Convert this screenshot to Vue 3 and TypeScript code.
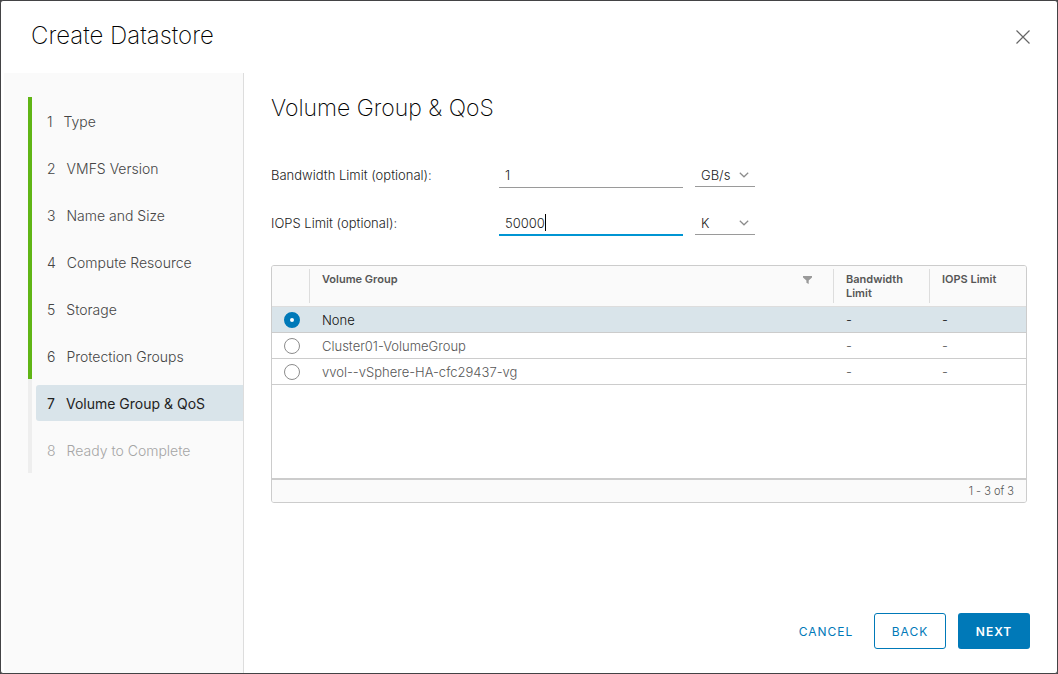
<script setup lang="ts">
import { ref } from 'vue'

interface Step {
  label: string
  state: 'done' | 'active' | 'pending'
}

interface VolumeGroup {
  id: string
  name: string
  bandwidth: string
  iops: string
}

const steps: Step[] = [
  { label: 'Type', state: 'done' },
  { label: 'VMFS Version', state: 'done' },
  { label: 'Name and Size', state: 'done' },
  { label: 'Compute Resource', state: 'done' },
  { label: 'Storage', state: 'done' },
  { label: 'Protection Groups', state: 'done' },
  { label: 'Volume Group & QoS', state: 'active' },
  { label: 'Ready to Complete', state: 'pending' },
]

const groups: VolumeGroup[] = [
  { id: 'none', name: 'None', bandwidth: '-', iops: '-' },
  { id: 'cluster01', name: 'Cluster01-VolumeGroup', bandwidth: '-', iops: '-' },
  { id: 'vvol', name: 'vvol--vSphere-HA-cfc29437-vg', bandwidth: '-', iops: '-' },
]

const bandwidth = ref('1')
const bandwidthUnit = ref('GB/s')
const iops = ref('50000')
const iopsUnit = ref('K')
const selected = ref('none')
</script>

<template>
  <div class="dialog" role="dialog" aria-labelledby="dialog-title">
    <header class="dialog-header">
      <h1 id="dialog-title">Create Datastore</h1>
      <button class="close" type="button" aria-label="Close">
        <svg viewBox="0 0 14 14" width="14" height="14" aria-hidden="true">
          <path d="M0.5 0.5 13.5 13.5M13.5 0.5 0.5 13.5" fill="none" stroke="currentColor" stroke-width="1.2" />
        </svg>
      </button>
    </header>

    <div class="dialog-body">
      <nav class="steps" aria-label="Steps">
        <ol>
          <li v-for="(step, i) in steps" :key="step.label" :class="step.state">
            <button type="button" :disabled="step.state === 'pending'">
              <span>{{ i + 1 }}</span>
              <span>{{ step.label }}</span>
            </button>
          </li>
        </ol>
      </nav>

      <main class="content">
        <h2>Volume Group &amp; QoS</h2>

        <form class="limits" @submit.prevent>
          <div class="row">
            <label for="bandwidth">Bandwidth Limit (optional):</label>
            <div class="field">
              <input id="bandwidth" v-model="bandwidth" type="text" />
            </div>
            <div class="unit">
              <select v-model="bandwidthUnit" aria-label="Bandwidth unit">
                <option>GB/s</option>
                <option>MB/s</option>
              </select>
              <svg viewBox="0 0 10 6" width="10" height="6" aria-hidden="true">
                <path d="M0.8 0.8 5 4.8 9.2 0.8" />
              </svg>
            </div>
          </div>
          <div class="row">
            <label for="iops">IOPS Limit (optional):</label>
            <div class="field focused">
              <input id="iops" v-model="iops" type="text" />
              <span class="caret"></span>
            </div>
            <div class="unit">
              <select v-model="iopsUnit" aria-label="IOPS unit">
                <option>K</option>
                <option>M</option>
              </select>
              <svg viewBox="0 0 10 6" width="10" height="6" aria-hidden="true">
                <path d="M0.8 0.8 5 4.8 9.2 0.8" />
              </svg>
            </div>
          </div>
        </form>

        <section class="datagrid">
          <div class="grid-area">
            <table>
              <colgroup>
                <col class="col-radio" />
                <col />
                <col class="col-limit" />
                <col class="col-last" />
              </colgroup>
              <thead>
                <tr>
                  <th aria-label="Select"></th>
                  <th scope="col">
                    <div class="head">
                      <span>Volume Group</span>
                      <button class="filter" type="button" aria-label="Filter">
                        <svg viewBox="0 0 9 8" width="9" height="8" aria-hidden="true">
                          <path d="M0 0H9V1.4L5.7 4.4V8L3.4 6.8V4.4L0 1.4Z" fill="currentColor" />
                        </svg>
                      </button>
                    </div>
                  </th>
                  <th scope="col"><div class="head">Bandwidth Limit</div></th>
                  <th scope="col"><div class="head">IOPS Limit</div></th>
                </tr>
              </thead>
              <tbody>
                <tr v-for="group in groups" :key="group.id" :class="{ selected: selected === group.id }">
                  <td class="pick">
                    <input :id="group.id" v-model="selected" type="radio" name="volume-group" :value="group.id" />
                  </td>
                  <td><label :for="group.id">{{ group.name }}</label></td>
                  <td>{{ group.bandwidth }}</td>
                  <td>{{ group.iops }}</td>
                </tr>
              </tbody>
            </table>
          </div>
          <footer class="grid-footer">1 - 3 of 3</footer>
        </section>

        <div class="actions">
          <button class="btn link" type="button">CANCEL</button>
          <button class="btn outline" type="button">BACK</button>
          <button class="btn primary" type="button">NEXT</button>
        </div>
      </main>
    </div>
  </div>
</template>

<style>
body {
  margin: 0;
  background: #434345;
}
</style>

<style scoped>
.dialog {
  box-sizing: border-box;
  display: flex;
  flex-direction: column;
  min-height: 100vh;
  border: 1px solid #434345;
  border-radius: 3px;
  background: #fff;
  color: #454545;
  font-family: Inter, "Liberation Sans", sans-serif;
  font-size: 13px;
  font-weight: 300;
  line-height: 24px;
}

button,
input,
select {
  margin: 0;
  padding: 0;
  border: 0;
  background: none;
  color: inherit;
  font: inherit;
}

h1,
h2 {
  margin: 0;
  font-weight: 200;
  line-height: 24px;
  color: #000;
}

h1 {
  padding-bottom: 2px;
  font-size: 24px;
}

h2 {
  font-size: 23px;
}

.dialog-header {
  display: flex;
  align-items: center;
  justify-content: space-between;
  height: 72px;
  padding: 0 27px 0 30px;
}

.close {
  display: flex;
  color: #666;
}

.dialog-body {
  display: flex;
  flex: 1;
  padding-left: 3px;
}

.steps {
  flex: none;
  width: 239px;
  border-right: 1px solid #ddd;
  background: #fafafa;
}

.steps ol {
  margin: 24px 0 0 24px;
  padding: 0;
  list-style: none;
}

.steps li {
  padding: 6px 0 5px 4px;
  border-left: 4px solid #60b515;
}

.steps li.active,
.steps li.pending {
  border-left-color: #eee;
}

.steps button {
  box-sizing: border-box;
  display: flex;
  align-items: center;
  gap: 11px;
  width: 100%;
  height: 36px;
  padding: 2px 0 0 11px;
  border-radius: 3px 0 0 3px;
  font-size: 14px;
  text-align: left;
}

.steps .active button {
  background: #d9e4ea;
  color: #222;
  font-weight: 400;
}

.steps .pending button {
  color: #a5a5a5;
}

.content {
  display: flex;
  flex: 1;
  flex-direction: column;
  min-width: 0;
  padding: 23px 30px 24px 27px;
}

.limits {
  display: flex;
  flex-direction: column;
  gap: 24px;
  margin-top: 43px;
  color: #222;
}

.row {
  display: flex;
  align-items: flex-start;
  height: 24px;
}

.row > label {
  width: 228px;
}

.field {
  box-sizing: border-box;
  display: flex;
  align-items: center;
  width: 184px;
  height: 25px;
  padding-left: 6px;
  border-bottom: 1px solid #9a9a9a;
}

.field input {
  width: 100%;
  height: 24px;
  outline: none;
}

.field.focused {
  border-bottom: 2px solid #0095d3;
}

.field.focused input {
  width: auto;
  min-width: 1px;
  field-sizing: content;
}

.caret {
  width: 1px;
  height: 17px;
  background: #000;
}

.unit {
  box-sizing: border-box;
  display: grid;
  align-items: center;
  width: 60px;
  height: 24px;
  margin-left: 12px;
  border-bottom: 1px solid #9a9a9a;
}

.unit select,
.unit svg {
  grid-area: 1 / 1;
}

.unit select {
  appearance: none;
  width: 100%;
  padding: 0 18px 0 6px;
}

.unit svg {
  justify-self: end;
  margin-right: 6px;
  fill: none;
  stroke: #8c8c8c;
  stroke-width: 1.2;
  pointer-events: none;
}

.datagrid {
  margin: 30px 0 24px;
  border: 1px solid #ccc;
  border-radius: 3px;
  overflow: hidden;
}

.grid-area {
  min-height: 212px;
}

table {
  width: 100%;
  table-layout: fixed;
  border-collapse: separate;
  border-spacing: 0;
}

.col-radio {
  width: 37px;
}

.col-limit {
  width: 96px;
}

.col-last {
  width: 97px;
}

th {
  height: 40px;
  padding: 0;
  border-bottom: 1px solid #ddd;
  background: #fafafa;
  text-align: left;
  vertical-align: top;
}

.head {
  box-sizing: border-box;
  display: flex;
  align-items: flex-start;
  justify-content: space-between;
  height: 34px;
  margin-top: 3px;
  padding: 3px 20px 0 12px;
  border-left: 1px solid #ddd;
  color: #565656;
  font-size: 11px;
  font-weight: 600;
  line-height: 14px;
}

.filter {
  display: flex;
  padding: 4px 1px 0 0;
  color: #9a9a9a;
}

td {
  box-sizing: border-box;
  height: 26px;
  padding: 0 0 0 13px;
  border-bottom: 1px solid #ccc;
  color: #565656;
  line-height: 24px;
}

td label {
  display: block;
}

.selected td {
  background: #d9e4ea;
  color: #111;
}

.pick {
  padding-left: 12px;
}

.pick input {
  appearance: none;
  display: block;
  box-sizing: border-box;
  width: 16px;
  height: 16px;
  border: 1px solid #8c8c8c;
  border-radius: 50%;
  background: #fff;
}

.pick input:checked {
  border: 6px solid #0079b8;
}

.grid-footer {
  padding-right: 12px;
  border-top: 2px solid #ccc;
  background: #fafafa;
  font-size: 11px;
  line-height: 22px;
  text-align: right;
  color: #565656;
}

.actions {
  display: flex;
  justify-content: flex-end;
  gap: 12px;
  margin-top: auto;
  margin-right: -3px;
}

.btn {
  box-sizing: border-box;
  height: 36px;
  min-width: 72px;
  padding-top: 2px;
  border-radius: 3px;
  color: #0079b8;
  font-size: 12px;
  font-weight: 400;
  letter-spacing: 1px;
}

.outline {
  border: 1px solid #0079b8;
}

.primary {
  background: #0079b8;
  color: #fff;
  font-weight: 600;
}
</style>
